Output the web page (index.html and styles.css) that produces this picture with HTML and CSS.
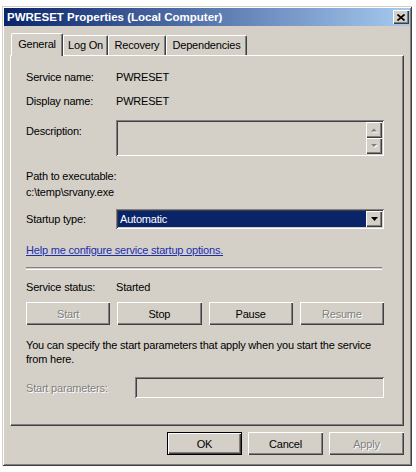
FILE: index.html
```html
<!DOCTYPE html>
<html>
<head>
<meta charset="utf-8">
<link rel="stylesheet" href="styles.css">
</head>
<body>
<div class="window">
  <div class="titlebar">
    <span class="title">PWRESET Properties (Local Computer)</span>
    <span class="close"><svg width="8" height="7" viewBox="0 0 8 7"><path d="M0.5 0.5L7.5 6.5M7.5 0.5L0.5 6.5" stroke="#000" stroke-width="1.7"/></svg></span>
  </div>
  <div class="body">
    <div class="tabs">
      <div class="tab active t1">General</div>
      <div class="tab t2">Log On</div>
      <div class="tab t3">Recovery</div>
      <div class="tab t4">Dependencies</div>
    </div>
    <div class="panel">
      <div class="row r-name"><span class="label">Service name:</span><span>PWRESET</span></div>
      <div class="row r-name"><span class="label">Display name:</span><span>PWRESET</span></div>
      <div class="row r-desc">
        <span class="label desc-label">Description:</span>
        <div class="field desc-box">
          <div class="scroll">
            <div class="sbtn"><svg width="9" height="6" viewBox="0 0 9 6"><path d="M2 5.5L5 2.5 8 5.5Z" fill="#fff"/><path d="M1 4.5L4 1.5 7 4.5Z" fill="#808080"/></svg></div>
            <div class="sbtn"><svg width="9" height="6" viewBox="0 0 9 6"><path d="M2 2L8 2 5 5Z" fill="#fff"/><path d="M1 1L7 1 4 4Z" fill="#808080"/></svg></div>
          </div>
        </div>
      </div>
      <div class="line path">Path to executable:</div>
      <div class="line">c:\temp\srvany.exe</div>
      <div class="row r-startup">
        <span class="label">Startup type:</span>
        <div class="field combo">
          <div class="combo-sel">Automatic</div>
          <div class="combo-btn"><svg width="7" height="4" viewBox="0 0 7 4"><path d="M0 0H7L3.5 4Z" fill="#000"/></svg></div>
        </div>
      </div>
      <div class="line link-line"><a class="link" href="#">Help me configure service startup options.</a></div>
      <div class="sep"></div>
      <div class="line status"><span class="label">Service status:</span><span>Started</span></div>
      <div class="actions">
        <div class="btn disabled">Start</div>
        <div class="btn">Stop</div>
        <div class="btn">Pause</div>
        <div class="btn disabled">Resume</div>
      </div>
      <div class="para">You can specify the start parameters that apply when you start the service<br>from here.</div>
      <div class="row r-params">
        <span class="label disabled-text plabel">Start parameters:</span>
        <div class="field params-box"></div>
      </div>
    </div>
    <div class="footer">
      <div class="btn fbtn default">OK</div>
      <div class="btn fbtn">Cancel</div>
      <div class="btn fbtn disabled">Apply</div>
    </div>
  </div>
</div>
</body>
</html>
```

FILE: styles.css
```css
body {
  margin: 0;
  background: #fff;
  font-family: "Liberation Sans", Arial, sans-serif;
  font-size: 11px;
  letter-spacing: -0.2px;
  color: #000;
}

.window {
  margin: 6px 0 0 2px;
  width: 410px;
  height: 460px;
  box-sizing: border-box;
  padding: 2px;
  background: #d4d0c8;
  box-shadow: inset 1px 1px #d4d0c8, inset -1px -1px #404040, inset 2px 2px #fff, inset -2px -2px #808080;
  display: flex;
  flex-direction: column;
}

.titlebar {
  height: 18px;
  flex: none;
  background: linear-gradient(to right, #0a246a, #a6caf0);
  display: flex;
  align-items: center;
  justify-content: space-between;
  padding: 0 1px 0 3px;
}

.title {
  color: #fff;
  font-weight: bold;
  font-size: 11.5px;
  letter-spacing: 0;
}

.close {
  width: 16px;
  height: 14px;
  box-sizing: border-box;
  background: #d4d0c8;
  box-shadow: inset 1px 1px #fff, inset -1px -1px #404040, inset -2px -2px #808080;
  display: flex;
  align-items: center;
  justify-content: center;
}

.body {
  flex: 1;
  padding: 7px 6px 0 6px;
  display: flex;
  flex-direction: column;
}

.tabs {
  display: flex;
  align-items: flex-end;
  height: 22px;
  padding-left: 1px;
  position: relative;
  z-index: 1;
}

.tab {
  height: 20px;
  box-sizing: border-box;
  background: #d4d0c8;
  border-top: 1px solid #fff;
  border-left: 1px solid #fff;
  border-right: 1px solid #404040;
  box-shadow: inset -1px 0 #808080;
  border-radius: 2px 2px 0 0;
  display: flex;
  align-items: center;
  justify-content: center;
  padding-bottom: 1px;
}

.tab.active {
  height: 23px;
  margin-bottom: -1px;
  padding-bottom: 2px;
}

.t1 { width: 52px; }
.t2 { width: 45px; }
.t3 { width: 58px; }
.t4 { width: 81px; }

.panel {
  height: 371px;
  box-sizing: border-box;
  padding: 9px 19px 0 15px;
  border-top: 1px solid #fff;
  border-left: 1px solid #fff;
  border-right: 1px solid #404040;
  border-bottom: 1px solid #404040;
  box-shadow: inset -1px -1px #808080;
  display: flex;
  flex-direction: column;
}

.row {
  display: flex;
  align-items: center;
}

.label {
  width: 90px;
  flex: none;
}

.r-name { height: 24px; }

.r-desc {
  margin-top: 7px;
  align-items: flex-start;
}

.desc-label { padding-top: 5px; }

.field {
  flex: 1;
  box-sizing: border-box;
  box-shadow: inset 1px 1px #808080, inset -1px -1px #fff, inset 2px 2px #404040, inset -2px -2px #d4d0c8;
  padding: 2px;
}

.desc-box {
  height: 36px;
  display: flex;
  justify-content: flex-end;
}

.scroll {
  width: 16px;
  display: flex;
  flex-direction: column;
}

.sbtn {
  flex: 1;
  background: #d4d0c8;
  box-shadow: inset 1px 1px #fff, inset -1px -1px #404040, inset -2px -2px #808080;
  display: flex;
  align-items: center;
  justify-content: center;
}

.line {
  height: 16px;
  line-height: 16px;
  display: flex;
}

.path { margin-top: 12px; }

.r-startup { margin-top: 9px; }

.combo {
  height: 20px;
  display: flex;
  background: #fff;
}

.combo-sel {
  flex: 1;
  background: #0a246a;
  color: #fff;
  padding-left: 2px;
  line-height: 16px;
}

.combo-btn {
  width: 16px;
  background: #d4d0c8;
  box-shadow: inset 1px 1px #fff, inset -1px -1px #404040, inset -2px -2px #808080;
  display: flex;
  align-items: center;
  justify-content: center;
}

.link-line { margin-top: 13px; }

.link {
  color: #1a2fb0;
  text-decoration: underline;
}

.sep {
  margin-top: 9px;
  height: 1px;
  border-top: 1px solid #808080;
  border-bottom: 1px solid #fff;
  margin-right: 2px;
}

.status { margin-top: 9px; }

.actions {
  margin-top: 7px;
  display: grid;
  grid-template-columns: repeat(4, 1fr);
  column-gap: 7px;
}

.btn {
  height: 23px;
  box-sizing: border-box;
  background: #d4d0c8;
  box-shadow: inset 1px 1px #fff, inset -1px -1px #404040, inset -2px -2px #808080;
  display: flex;
  align-items: center;
  justify-content: center;
}

.btn.disabled,
.disabled-text {
  color: #808080;
  text-shadow: 1px 1px #fff;
}

.para {
  margin-top: 13px;
  line-height: 14px;
}

.r-params { margin-top: 11px; }

.plabel { width: 109px; }

.params-box { height: 21px; }

.footer {
  margin-top: 6px;
  display: flex;
  justify-content: flex-end;
  gap: 6px;
}

.fbtn { width: 75px; }

.btn.default {
  border: 1px solid #000;
}
```
